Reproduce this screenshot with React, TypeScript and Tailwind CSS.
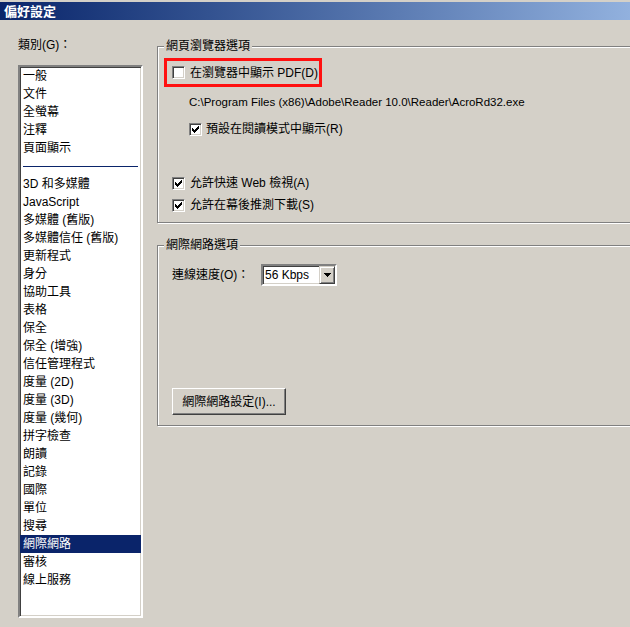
import React from 'react';

const FONT = { fontFamily: '"Liberation Sans", "Noto Sans CJK TC", sans-serif' };

const topItems = ['一般', '文件', '全螢幕', '注釋', '頁面顯示'];
const bottomItems = [
  '3D 和多媒體',
  'JavaScript',
  '多媒體 (舊版)',
  '多媒體信任 (舊版)',
  '更新程式',
  '身分',
  '協助工具',
  '表格',
  '保全',
  '保全 (增強)',
  '信任管理程式',
  '度量 (2D)',
  '度量 (3D)',
  '度量 (幾何)',
  '拼字檢查',
  '朗讀',
  '記錄',
  '國際',
  '單位',
  '搜尋',
  '網際網路',
  '審核',
  '線上服務',
];

function Checkbox({ checked }: { checked?: boolean }) {
  return (
    <span className="relative inline-block w-[13px] h-[13px] shrink-0 bg-white border border-t-[#808080] border-l-[#808080] border-b-white border-r-white shadow-[inset_1px_1px_0_#404040,inset_-1px_-1px_0_#d4d0c8]">
      {checked && (
        <svg
          width="7"
          height="7"
          viewBox="0 0 7 7"
          shapeRendering="crispEdges"
          className="absolute left-[2px] top-[2px]"
        >
          <rect x="0" y="2" width="1" height="3" fill="#000" />
          <rect x="1" y="3" width="1" height="3" fill="#000" />
          <rect x="2" y="4" width="1" height="3" fill="#000" />
          <rect x="3" y="3" width="1" height="3" fill="#000" />
          <rect x="4" y="2" width="1" height="3" fill="#000" />
          <rect x="5" y="1" width="1" height="3" fill="#000" />
          <rect x="6" y="0" width="1" height="3" fill="#000" />
        </svg>
      )}
    </span>
  );
}

function Group({ title, height, children }: { title: string; height: string; children: React.ReactNode }) {
  return (
    <div
      className={`flex flex-col w-[490px] ${height} border border-[#808080] shadow-[inset_1px_1px_0_#fff,1px_1px_0_#fff]`}
    >
      <span className="-mt-[8px] ml-[6px] w-fit px-[2px] bg-[#d4d0c8] text-[12px] leading-[14px]">{title}</span>
      {children}
    </div>
  );
}

export default function App() {
  return (
    <div className="w-[630px] h-[627px] overflow-hidden bg-[#d4d0c8] text-black pt-[2px]" style={FONT}>
      <div className="h-[18px] flex items-center pl-[4px] bg-gradient-to-r from-[#0a246a] to-[#92b1de]">
        <span className="text-white font-bold text-[13px] leading-none">偏好設定</span>
      </div>

      <div className="flex">
        {/* category list */}
        <div className="w-[157px] shrink-0 pl-[18px] flex flex-col">
          <div className="mt-[18px] text-[12px] leading-[14px]">類別(G)：</div>
          <div className="mt-[13px] w-[125px] h-[553px] bg-white border-2 border-t-[#808080] border-l-[#808080] border-b-white border-r-white shadow-[inset_1px_1px_0_#404040,inset_-1px_-1px_0_#d4d0c8]">
            {topItems.map((item) => (
              <div key={item} className="h-[18px] pl-[3px] flex items-center text-[12px] whitespace-nowrap">
                {item}
              </div>
            ))}
            <div className="h-[18px] flex items-center px-[3px]">
              <div className="w-full h-px bg-[#0a246a]" />
            </div>
            {bottomItems.map((item) => {
              const selected = item === '網際網路';
              return (
                <div
                  key={item}
                  className={`h-[18px] pl-[3px] flex items-center text-[12px] whitespace-nowrap ${
                    selected ? 'bg-[#0a246a] text-white' : ''
                  }`}
                >
                  {item}
                </div>
              );
            })}
          </div>
        </div>

        {/* options */}
        <div className="flex flex-col pt-[26px]">
          <Group title="網頁瀏覽器選項" height="h-[177px]">
            <div className="mt-[5px] ml-[6px] w-[158px] h-[29px] border-[3px] border-[#ff1010] flex items-center pl-[5px] gap-[5px]">
              <Checkbox />
              <span className="text-[12px] leading-[14px] whitespace-nowrap">在瀏覽器中顯示 PDF(D)</span>
            </div>
            <div className="mt-[8px] ml-[31px] text-[11.5px] leading-[14px] whitespace-nowrap">
              C:\Program Files (x86)\Adobe\Reader 10.0\Reader\AcroRd32.exe
            </div>
            <div className="mt-[13px] ml-[31px] h-[14px] flex items-center gap-[4px]">
              <Checkbox checked />
              <span className="text-[12px] leading-[14px] whitespace-nowrap">預設在閱讀模式中顯示(R)</span>
            </div>
            <div className="mt-[40px] ml-[14px] h-[14px] flex items-center gap-[5px]">
              <Checkbox checked />
              <span className="text-[12px] leading-[14px] whitespace-nowrap">允許快速 Web 檢視(A)</span>
            </div>
            <div className="mt-[8px] ml-[14px] h-[14px] flex items-center gap-[5px]">
              <Checkbox checked />
              <span className="text-[12px] leading-[14px] whitespace-nowrap">允許在幕後推測下載(S)</span>
            </div>
          </Group>

          <div className="mt-[22px]">
            <Group title="網際網路選項" height="h-[181px]">
              <div className="mt-[12px] ml-[14px] flex items-center">
                <span className="w-[89px] text-[12px] leading-[14px] whitespace-nowrap">連線速度(O)：</span>
                <div className="w-[76px] h-[22px] bg-white border-2 border-t-[#808080] border-l-[#808080] border-b-white border-r-white shadow-[inset_1px_1px_0_#404040,inset_-1px_-1px_0_#d4d0c8] flex items-center">
                  <span className="flex-1 pl-[2px] text-[12px] leading-[14px] whitespace-nowrap">56 Kbps</span>
                  <div className="w-[16px] h-[18px] bg-[#d4d0c8] border border-t-[#d4d0c8] border-l-[#d4d0c8] border-b-[#404040] border-r-[#404040] shadow-[inset_1px_1px_0_#fff,inset_-1px_-1px_0_#808080] flex items-center justify-center">
                    <svg width="7" height="4" viewBox="0 0 7 4" shapeRendering="crispEdges">
                      <path d="M0 0h7v1h-1v1h-1v1h-1v1h-1v-1h-1v-1h-1v-1h-1z" fill="#000" />
                    </svg>
                  </div>
                </div>
              </div>
              <button className="mt-[102px] ml-[14px] w-[114px] h-[27px] bg-[#d4d0c8] border border-t-white border-l-white border-b-[#404040] border-r-[#404040] shadow-[inset_-1px_-1px_0_#808080] text-[12px] leading-[14px] whitespace-nowrap flex items-center justify-center">
                網際網路設定(I)...
              </button>
            </Group>
          </div>
        </div>
      </div>
    </div>
  );
}
